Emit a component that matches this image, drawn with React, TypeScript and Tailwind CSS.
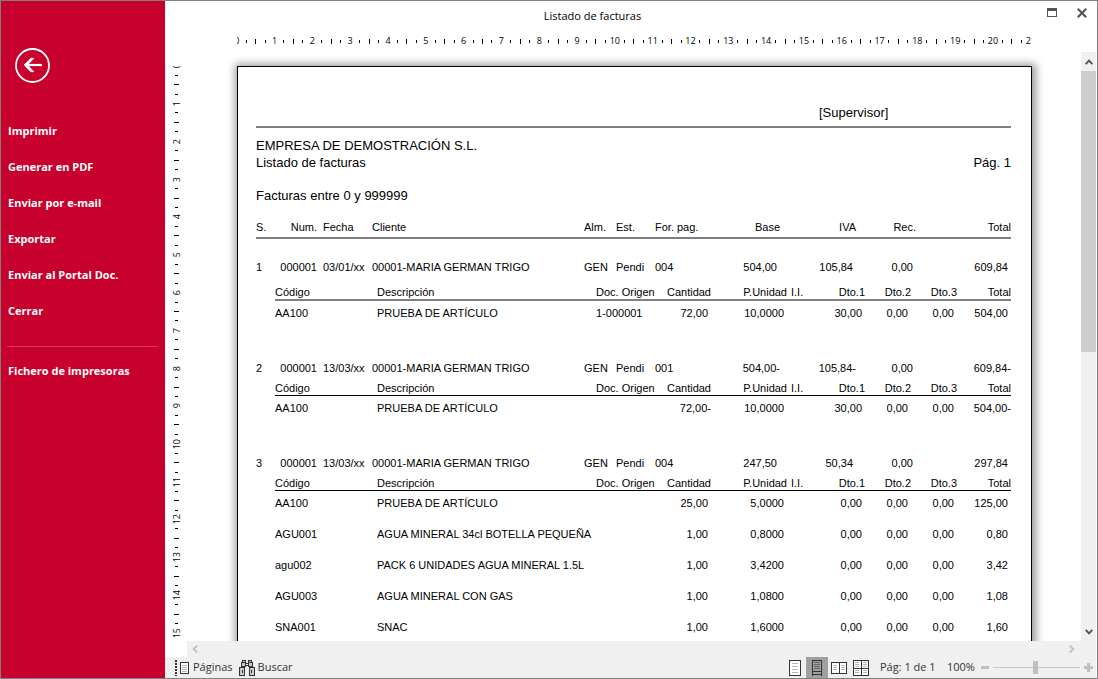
import React from "react";

type DetailLine = {
  code: string;
  description: string;
  origin?: string;
  quantity: string;
  price: string;
  discounts: [string, string, string];
  total: string;
};

type Invoice = {
  serie: string;
  number: string;
  date: string;
  customer: string;
  warehouse: string;
  status: string;
  payment: string;
  base: string;
  iva: string;
  rec: string;
  total: string;
  lines: DetailLine[];
};

const NO_DISCOUNT: [string, string, string] = ["0,00", "0,00", "0,00"];

const INVOICES: Invoice[] = [
  {
    serie: "1",
    number: "000001",
    date: "03/01/xx",
    customer: "00001-MARIA GERMAN TRIGO",
    warehouse: "GEN",
    status: "Pendi",
    payment: "004",
    base: "504,00",
    iva: "105,84",
    rec: "0,00",
    total: "609,84",
    lines: [
      {
        code: "AA100",
        description: "PRUEBA DE ARTÍCULO",
        origin: "1-000001",
        quantity: "72,00",
        price: "10,0000",
        discounts: ["30,00", "0,00", "0,00"],
        total: "504,00",
      },
    ],
  },
  {
    serie: "2",
    number: "000001",
    date: "13/03/xx",
    customer: "00001-MARIA GERMAN TRIGO",
    warehouse: "GEN",
    status: "Pendi",
    payment: "001",
    base: "504,00-",
    iva: "105,84-",
    rec: "0,00",
    total: "609,84-",
    lines: [
      {
        code: "AA100",
        description: "PRUEBA DE ARTÍCULO",
        quantity: "72,00-",
        price: "10,0000",
        discounts: ["30,00", "0,00", "0,00"],
        total: "504,00-",
      },
    ],
  },
  {
    serie: "3",
    number: "000001",
    date: "13/03/xx",
    customer: "00001-MARIA GERMAN TRIGO",
    warehouse: "GEN",
    status: "Pendi",
    payment: "004",
    base: "247,50",
    iva: "50,34",
    rec: "0,00",
    total: "297,84",
    lines: [
      { code: "AA100", description: "PRUEBA DE ARTÍCULO", quantity: "25,00", price: "5,0000", discounts: NO_DISCOUNT, total: "125,00" },
      { code: "AGU001", description: "AGUA MINERAL 34cl BOTELLA PEQUEÑA", quantity: "1,00", price: "0,8000", discounts: NO_DISCOUNT, total: "0,80" },
      { code: "agu002", description: "PACK 6 UNIDADES AGUA MINERAL 1.5L", quantity: "1,00", price: "3,4200", discounts: NO_DISCOUNT, total: "3,42" },
      { code: "AGU003", description: "AGUA MINERAL CON GAS", quantity: "1,00", price: "1,0800", discounts: NO_DISCOUNT, total: "1,08" },
      { code: "SNA001", description: "SNAC", quantity: "1,00", price: "1,6000", discounts: NO_DISCOUNT, total: "1,60" },
    ],
  },
];

const MENU = [
  "Imprimir",
  "Generar en PDF",
  "Enviar por e-mail",
  "Exportar",
  "Enviar al Portal Doc.",
  "Cerrar",
];

const CENTIMETRES = Array.from({ length: 22 }, (_, i) => i);

function MenuItem({ label }: { label: string }) {
  return (
    <button className="flex h-9 w-full items-center pl-[7px] text-left text-[11px] font-bold text-white hover:bg-white/10">
      {label}
    </button>
  );
}

function Sidebar() {
  return (
    <aside className="flex w-[164px] shrink-0 flex-col bg-[#c8002d] pt-[47px]">
      <button aria-label="Volver" className="ml-[14px] size-[35px]">
        <svg viewBox="0 0 35 35" className="size-[35px]" fill="none" stroke="#fff">
          <circle cx="17.5" cy="17.5" r="16.5" strokeWidth="1.8" />
          <path d="M10.5 17H27" strokeWidth="2.2" />
          <path d="M19 10.2H15.6L9 17L15.6 23.8H19L12.6 17Z" fill="#fff" strokeWidth="0.5" />
        </svg>
      </button>
      <nav className="mt-[30px]">
        {MENU.map((label) => (
          <MenuItem key={label} label={label} />
        ))}
        <hr className="mt-[17px] mb-[6px] ml-[6px] mr-2 border-[#d33a5c]" />
        <MenuItem label="Fichero de impresoras" />
      </nav>
    </aside>
  );
}

function HorizontalRuler() {
  return (
    <div className="flex h-[21px] shrink-0 justify-center pl-[23px] pr-4 text-[9px] text-black">
      <div className="w-[795px] overflow-hidden">
        <div className="-ml-[5px] flex h-5 w-[832px]">
          {CENTIMETRES.map((cm) => (
            <div key={cm} className="flex flex-1 items-center">
              <span className="flex w-0 flex-1 justify-center">{cm}</span>
              <span className="flex flex-1 justify-center">
                <i className="h-[3px] w-px bg-black" />
              </span>
              <span className="flex flex-1 justify-center">
                <i className="h-[5px] w-px bg-black" />
              </span>
              <span className="flex flex-1 justify-center">
                <i className="h-[3px] w-px bg-black" />
              </span>
            </div>
          ))}
        </div>
      </div>
    </div>
  );
}

function VerticalRuler() {
  return (
    <div className="w-[23px] shrink-0 overflow-hidden pt-[14px] text-[9px] text-black">
      <div className="h-full overflow-hidden">
        <div className="-mt-[5px] flex h-[832px] flex-col">
          {CENTIMETRES.map((cm) => (
            <div key={cm} className="flex flex-1 flex-col items-center">
              <span className="flex h-0 flex-1 items-center">
                <span className="rotate-180 leading-3 [writing-mode:vertical-rl]">{cm}</span>
              </span>
              <span className="flex flex-1 items-center">
                <i className="h-px w-[3px] bg-black" />
              </span>
              <span className="flex flex-1 items-center">
                <i className="h-px w-[5px] bg-black" />
              </span>
              <span className="flex flex-1 items-center">
                <i className="h-px w-[3px] bg-black" />
              </span>
            </div>
          ))}
        </div>
      </div>
    </div>
  );
}

// Keeps a slot for the trailing minus sign so the digits stay aligned
function Amount({ value }: { value: string }) {
  return <span className={value.endsWith("-") ? "" : "pr-[3px]"}>{value}</span>;
}

function DetailTable({ lines, thick }: { lines: DetailLine[]; thick: boolean }) {
  return (
    <table className="ml-[19px] w-[736px] table-fixed border-separate border-spacing-0">
      <colgroup>
        <col className="w-[102px]" />
        <col className="w-[215px]" />
        <col className="w-[64px]" />
        <col className="w-[55px]" />
        <col className="w-[76px]" />
        <col className="w-[23px]" />
        <col className="w-[55px]" />
        <col className="w-[46px]" />
        <col className="w-[46px]" />
        <col className="w-[54px]" />
      </colgroup>
      <thead>
        <tr
          className={`text-left leading-[14px] *:font-normal ${
            thick
              ? "*:border-b-2 *:border-[#808080] *:pt-2"
              : "*:border-b *:border-black *:pt-[3px]"
          }`}
        >
          <th>Código</th>
          <th>Descripción</th>
          <th className="pl-1">Doc. Origen</th>
          <th className="text-right">Cantidad</th>
          <th className="text-right">P.Unidad</th>
          <th className="pl-1">I.I.</th>
          <th className="text-right">Dto.1</th>
          <th className="text-right">Dto.2</th>
          <th className="text-right">Dto.3</th>
          <th className="text-right">Total</th>
        </tr>
      </thead>
      <tbody>
        {lines.map((line) => (
          <tr key={line.code} className="h-[31px] align-top leading-6">
            <td>{line.code}</td>
            <td className="overflow-hidden">{line.description}</td>
            <td className="pl-1">{line.origin}</td>
            <td className="text-right">
              <Amount value={line.quantity} />
            </td>
            <td className="text-right">
              <Amount value={line.price} />
            </td>
            <td />
            {line.discounts.map((discount, i) => (
              <td key={i} className="text-right">
                <Amount value={discount} />
              </td>
            ))}
            <td className="text-right">
              <Amount value={line.total} />
            </td>
          </tr>
        ))}
      </tbody>
    </table>
  );
}

function InvoiceTable() {
  return (
    <table className="w-[755px] table-fixed border-separate border-spacing-0 whitespace-nowrap text-[11px]">
      <colgroup>
        <col className="w-[20px]" />
        <col className="w-[41px]" />
        <col className="w-[55px]" />
        <col className="w-[212px]" />
        <col className="w-[32px]" />
        <col className="w-[39px]" />
        <col className="w-[60px]" />
        <col className="w-[65px]" />
        <col className="w-[76px]" />
        <col className="w-[60px]" />
        <col className="w-[95px]" />
      </colgroup>
      <thead>
        <tr className="text-left leading-5 *:border-b-2 *:border-[#808080] *:font-normal">
          <th>S.</th>
          <th className="text-right">Num.</th>
          <th className="pl-[6px]">Fecha</th>
          <th>Cliente</th>
          <th>Alm.</th>
          <th>Est.</th>
          <th>For. pag.</th>
          <th className="text-right">Base</th>
          <th className="text-right">IVA</th>
          <th className="text-right">Rec.</th>
          <th className="text-right">Total</th>
        </tr>
      </thead>
      {INVOICES.map((invoice, idx) => (
        <tbody key={invoice.serie}>
          <tr className={`leading-5 ${idx === 0 ? "*:pt-[18px]" : ""}`}>
            <td>{invoice.serie}</td>
            <td className="text-right">{invoice.number}</td>
            <td className="pl-[6px]">{invoice.date}</td>
            <td>{invoice.customer}</td>
            <td>{invoice.warehouse}</td>
            <td>{invoice.status}</td>
            <td>{invoice.payment}</td>
            <td className="text-right">
              <Amount value={invoice.base} />
            </td>
            <td className="text-right">
              <Amount value={invoice.iva} />
            </td>
            <td className="text-right">
              <Amount value={invoice.rec} />
            </td>
            <td className="text-right">
              <Amount value={invoice.total} />
            </td>
          </tr>
          <tr>
            <td colSpan={11} className="pb-[26px]">
              <DetailTable lines={invoice.lines} thick={idx === 0} />
            </td>
          </tr>
        </tbody>
      ))}
    </table>
  );
}

function Paper() {
  return (
    <article className="h-[1123px] w-[795px] shrink-0 border border-black bg-white pl-[18px] pr-5 pt-[36px] font-['Liberation_Sans',Arial,sans-serif] text-[13px] leading-[17px] text-black shadow-[1px_1px_8px_3px_rgba(0,0,0,0.4)]">
      <div className="h-[25px] border-b-2 border-[#808080] pl-[563px] leading-5">[Supervisor]</div>
      <header className="pt-[9px]">
        <p>EMPRESA DE DEMOSTRACIÓN S.L.</p>
        <div className="flex justify-between">
          <h2>Listado de facturas</h2>
          <p>Pág. 1</p>
        </div>
        <p className="mt-4 mb-[13px]">Facturas entre 0 y 999999</p>
      </header>
      <InvoiceTable />
    </article>
  );
}

function VerticalScrollbar() {
  return (
    <div className="mr-px flex w-[15px] shrink-0 flex-col bg-[#f0f0f0]">
      <button aria-label="Subir" className="flex h-[19px] shrink-0 items-center justify-center">
        <svg viewBox="0 0 8 6" className="h-[6px] w-2" fill="none" stroke="#505050" strokeWidth="1.8">
          <path d="M0.7 5.2L4 1.6L7.3 5.2" />
        </svg>
      </button>
      <div className="flex-1">
        <div className="h-[51%] bg-[#cdcdcd]" />
      </div>
      <button aria-label="Bajar" className="flex h-[19px] shrink-0 items-center justify-center">
        <svg viewBox="0 0 8 6" className="h-[6px] w-2" fill="none" stroke="#505050" strokeWidth="1.8">
          <path d="M0.7 0.8L4 4.4L7.3 0.8" />
        </svg>
      </button>
    </div>
  );
}

function HorizontalScrollbar() {
  return (
    <div className="flex h-4 shrink-0 pl-[22px] pr-px">
      <div className="flex flex-1 items-center justify-between bg-[#f0f0f0] pr-4">
        <button aria-label="Izquierda" className="flex w-4 justify-center">
          <svg viewBox="0 0 6 8" className="h-2 w-[6px]" fill="none" stroke="#bfbfbf" strokeWidth="1.8">
            <path d="M5.2 0.7L1.6 4L5.2 7.3" />
          </svg>
        </button>
        <button aria-label="Derecha" className="flex w-4 justify-center">
          <svg viewBox="0 0 6 8" className="h-2 w-[6px]" fill="none" stroke="#bfbfbf" strokeWidth="1.8">
            <path d="M0.8 0.7L4.4 4L0.8 7.3" />
          </svg>
        </button>
      </div>
    </div>
  );
}

function PagesIcon() {
  return (
    <svg viewBox="0 0 14 16" className="h-4 w-[14px]" shapeRendering="crispEdges">
      <path d="M1 0V16" stroke="#333" strokeWidth="2" strokeDasharray="2 1" />
      <rect x="5.5" y="2.5" width="8" height="11" fill="#fff" stroke="#333" />
      <path d="M7 5.5H12M7 7.5H12M7 9.5H12M7 11.5H12" stroke="#b4b4b4" />
    </svg>
  );
}

function BinocularsIcon() {
  return (
    <svg viewBox="0 0 16 16" className="size-4" shapeRendering="crispEdges" stroke="#333">
      <path d="M3.5 0.5H6.5V6.5H2.5V2.5H3.5Z" fill="#c8c8c8" />
      <path d="M9.5 0.5H12.5V2.5H13.5V6.5H9.5Z" fill="#c8c8c8" />
      <path d="M6 3.5H10M6 5.5H10" fill="none" />
      <rect x="0.5" y="7.5" width="5" height="8" fill="#c8c8c8" />
      <rect x="10.5" y="7.5" width="5" height="8" fill="#c8c8c8" />
      <path d="M3.5 10V13M12.5 10V13M3 2.5H6M10 2.5H13" fill="none" />
    </svg>
  );
}

function SinglePageIcon() {
  return (
    <svg viewBox="0 0 12 16" className="h-4 w-3" shapeRendering="crispEdges">
      <rect x="0.5" y="0.5" width="11" height="15" fill="#fff" stroke="#333" />
      <path d="M3 3.5H9M3 6.5H9M3 9.5H9M3 12.5H9" stroke="#b4b4b4" />
    </svg>
  );
}

function ContinuousIcon() {
  return (
    <svg viewBox="0 0 10 16" className="h-4 w-[10px]" shapeRendering="crispEdges">
      <path d="M0.5 16V0.5H9.5V16M0 11.5H10M0 14.5H10" fill="none" stroke="#333" />
      <path d="M2 2.5H8M2 4.5H8M2 6.5H8M2 8.5H8" stroke="#666" />
    </svg>
  );
}

function BookIcon() {
  return (
    <svg viewBox="0 0 16 12" className="h-3 w-4" shapeRendering="crispEdges">
      <rect x="0.5" y="0.5" width="15" height="11" fill="#fff" stroke="#333" />
      <path d="M8 0V12" stroke="#333" strokeWidth="1" />
      <path d="M2 3.5H6M2 5.5H6M2 7.5H6M10 3.5H14M10 5.5H14M10 7.5H14" stroke="#b4b4b4" />
    </svg>
  );
}

function GridIcon() {
  return (
    <svg viewBox="0 0 16 16" className="size-4" shapeRendering="crispEdges">
      <rect x="0.5" y="0.5" width="15" height="15" fill="#fff" stroke="#333" />
      <path d="M8 0V16M0 8H16" stroke="#333" />
      <path
        d="M2 2.5H6M2 4.5H6M2 6.5H6M10 2.5H14M10 4.5H14M10 6.5H14M2 10.5H6M2 12.5H6M10 10.5H14M10 12.5H14"
        stroke="#b4b4b4"
      />
    </svg>
  );
}

function StatusBar() {
  return (
    <footer className="mr-px flex h-[21px] shrink-0 items-center bg-[#f0f0f0] pl-[10px] pr-[3px] text-[11px] text-[#333]">
      <button className="flex items-center gap-1">
        <PagesIcon />
        Páginas
      </button>
      <button className="ml-[6px] flex items-center gap-[3px]">
        <BinocularsIcon />
        Buscar
      </button>
      <div className="ml-auto flex h-full items-center">
        <button aria-label="Una página" className="flex w-[22px] justify-center">
          <SinglePageIcon />
        </button>
        <button aria-label="Continua" className="flex h-full w-[22px] items-center justify-center bg-[#a0a0a0]">
          <ContinuousIcon />
        </button>
        <button aria-label="Dos páginas" className="flex w-[22px] justify-center">
          <BookIcon />
        </button>
        <button aria-label="Varias páginas" className="flex w-[22px] justify-center">
          <GridIcon />
        </button>
      </div>
      <span className="ml-2 w-[67px]">Pág: 1 de 1</span>
      <span className="w-[34px]">100%</span>
      <button aria-label="Reducir" className="flex h-[9px] w-2 items-center">
        <i className="h-[3px] w-2 bg-[#bfbfbf]" />
      </button>
      <input
        type="range"
        aria-label="Zoom"
        min={0}
        max={100}
        defaultValue={49}
        className="mx-1 h-[13px] w-[87px] appearance-none bg-[linear-gradient(#c8c8c8,#c8c8c8)] bg-[length:100%_1px] bg-center bg-no-repeat [&::-webkit-slider-thumb]:h-[13px] [&::-webkit-slider-thumb]:w-[5px] [&::-webkit-slider-thumb]:appearance-none [&::-webkit-slider-thumb]:bg-[#bfbfbf]"
      />
      <button aria-label="Ampliar">
        <svg viewBox="0 0 9 9" className="size-[9px]" shapeRendering="crispEdges">
          <path d="M0 4.5H9M4.5 0V9" stroke="#bfbfbf" strokeWidth="3" />
        </svg>
      </button>
    </footer>
  );
}

function TitleBar() {
  return (
    <div className="flex h-[30px] shrink-0">
      <h1 className="flex-1 text-center text-[11px] leading-[30px] text-black">Listado de facturas</h1>
      <div className="flex w-[77px] justify-end">
        <button aria-label="Maximizar" className="flex h-[23px] w-[30px] items-center justify-center">
          <svg viewBox="0 0 10 9" className="h-[9px] w-[10px]" shapeRendering="crispEdges">
            <path d="M0.5 0V8.5H9.5V0" fill="none" stroke="#555" />
            <path d="M0 1.5H10" stroke="#555" strokeWidth="3" />
          </svg>
        </button>
        <button aria-label="Cerrar ventana" className="flex h-[23px] w-[30px] items-center justify-center">
          <svg viewBox="0 0 10 10" className="size-[10px]" stroke="#555" strokeWidth="2.2">
            <path d="M0.8 0.8L9.2 9.2M9.2 0.8L0.8 9.2" />
          </svg>
        </button>
      </div>
    </div>
  );
}

export default function App() {
  return (
    <div className="flex h-screen overflow-hidden border border-[#808080] bg-white font-['Open_Sans','Noto_Sans',sans-serif]">
      <Sidebar />
      <main className="flex min-w-0 flex-1 flex-col">
        <TitleBar />
        <HorizontalRuler />
        <div className="flex min-h-0 flex-1">
          <VerticalRuler />
          <div className="flex min-w-0 flex-1 justify-center overflow-hidden pt-[14px]">
            <Paper />
          </div>
          <VerticalScrollbar />
        </div>
        <HorizontalScrollbar />
        <StatusBar />
      </main>
    </div>
  );
}
